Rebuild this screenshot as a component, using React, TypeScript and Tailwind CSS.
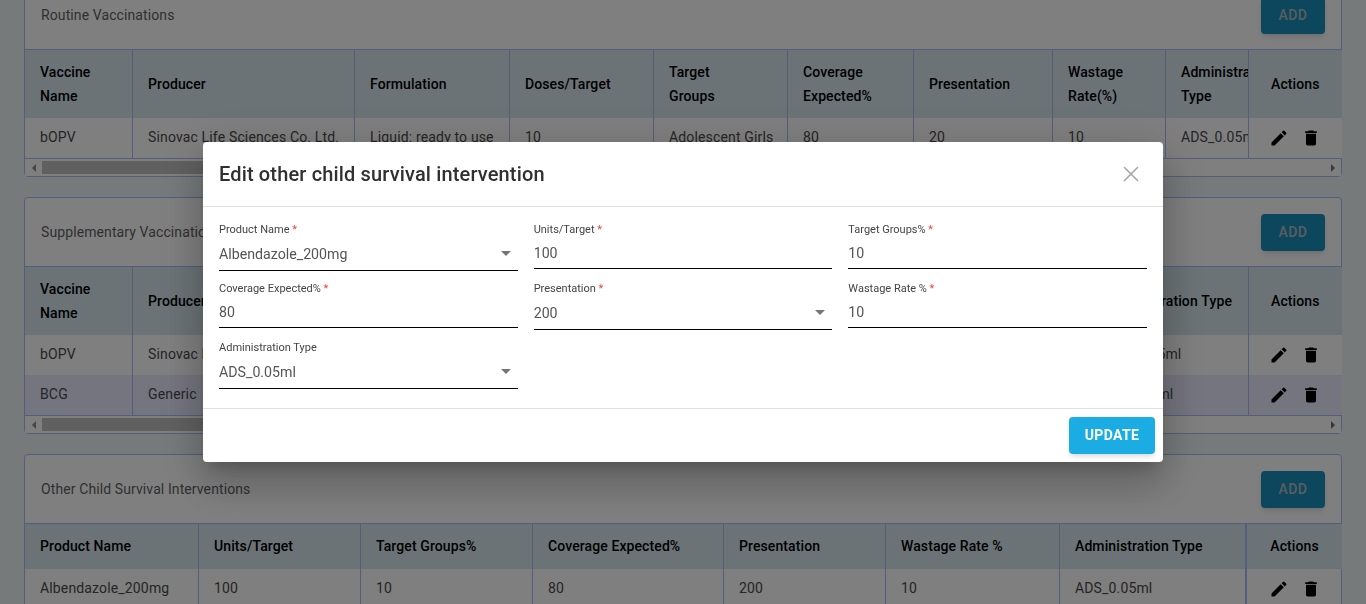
import { X } from "lucide-react";

const font = { fontFamily: "Roboto, sans-serif" };

function EditIcon() {
  return (
    <svg viewBox="0 0 24 24" className="h-5 w-5 fill-black">
      <path d="M3 17.25V21h3.75L17.81 9.94l-3.75-3.75L3 17.25zM20.71 7.04a.996.996 0 0 0 0-1.41l-2.34-2.34a.996.996 0 0 0-1.41 0l-1.83 1.83 3.75 3.75 1.83-1.83z" />
    </svg>
  );
}

function DeleteIcon() {
  return (
    <svg viewBox="0 0 24 24" className="h-5 w-5 fill-black">
      <path d="M6 19c0 1.1.9 2 2 2h8c1.1 0 2-.9 2-2V7H6v12zM19 4h-3.5l-1-1h-5l-1 1H5v2h14V4z" />
    </svg>
  );
}

function Scrollbar() {
  return (
    <div className="flex h-[18px] items-center border-t border-[#aabaff] bg-white">
      <div className="flex w-[17px] justify-center">
        <div className="h-0 w-0 border-y-4 border-r-4 border-y-transparent border-r-[#8c8c8c]" />
      </div>
      <div className="h-[13px] w-[1000px] bg-[#c1c1c1]" />
      <div className="flex-1" />
      <div className="flex w-[17px] justify-center">
        <div className="h-0 w-0 border-y-4 border-l-4 border-y-transparent border-l-[#6e6e6e]" />
      </div>
    </div>
  );
}

function Cardhead({ title }: { title: string }) {
  return (
    <div className="flex h-[69px] items-center justify-between border-b border-[#aabaff] pr-4 pl-4">
      <span className="pb-px text-sm tracking-[0.1px] text-[#5f5f5f]">{title}</span>
      <button className="flex h-[37px] w-16 items-center justify-center rounded bg-[#1a8fbb] pb-px text-sm font-medium tracking-[0.4px] text-[#b5bcc0] shadow-md">
        ADD
      </button>
    </div>
  );
}

function Actions() {
  return (
    <div className="flex items-center justify-center gap-3">
      <EditIcon />
      <DeleteIcon />
    </div>
  );
}

const th = "border-r border-[#aabaff] pr-[14px] pb-px pl-[15.5px] first:pl-[15px] text-left align-middle text-sm leading-6 font-medium tracking-[0.1px] text-black overflow-hidden whitespace-pre-line";
const td = "border-r border-[#aabaff] pr-[14px] pb-[2px] pl-[15.5px] first:pl-[15px] align-middle text-sm tracking-[0.15px] text-[#4a4a4a] overflow-hidden whitespace-nowrap";
const actionsTh = "pb-px text-center text-sm font-medium tracking-[0.1px] text-black";

const routineCols = [107, 222, 155, 144, 134, 126, 139, 113, 83, 94];
const supplementaryCols = [107, 222, 155, 144, 134, 126, 100, 75, 160, 94];
const vaccineHead = ["Vaccine\nName", "Producer", "Formulation", "Doses/Target", "Target\nGroups", "Coverage\nExpected%", "Presentation", "Wastage\nRate(%)", "Administration\nType"];
const supplementaryHead = ["Vaccine\nName", "Producer", "Formulation", "Doses/Target", "Target\nGroups", "Coverage\nExpected%", "Presentation", "Wastage\nRate(%)", "Administration\u00a0Type"];

function VaccineTable({ rows, head, cols }: { rows: string[][]; head: string[]; cols: number[] }) {
  return (
    <table className="w-full table-fixed border-collapse">
      <colgroup>
        {cols.map((w, i) => (
          <col key={i} style={{ width: w }} />
        ))}
      </colgroup>
      <thead>
        <tr className="h-[68px] bg-[#d6e6ec]">
          {head.map((h) => (
            <th key={h} className={th}>{h}</th>
          ))}
          <th className={actionsTh}>Actions</th>
        </tr>
      </thead>
      <tbody>
        {rows.map((r, i) => (
          <tr key={i} className={i % 2 ? "h-10 bg-[#ebeaff]" : "h-10 bg-white"}>
            {r.map((c, j) => (
              <td key={j} className={td}>{c}</td>
            ))}
            <td><Actions /></td>
          </tr>
        ))}
      </tbody>
    </table>
  );
}

const otherCols = [173, 162, 172, 191, 162, 174, 187, 96];
const otherHead = ["Product Name", "Units/Target", "Target Groups%", "Coverage Expected%", "Presentation", "Wastage Rate %", "Administration Type"];
const otherRow = ["Albendazole_200mg", "100", "10", "80", "200", "10", "ADS_0.05ml"];

function Field({ label, value, select, required = true, tall }: { label: string; value: string; select?: boolean; required?: boolean; tall?: boolean }) {
  return (
    <div className="flex flex-col">
      <label className="text-[11px] leading-[14px] text-[#444444]">
        {label}
        {required && <span className="text-[#f44336]"> *</span>}
      </label>
      <div className={tall ? "flex h-[34px] items-center justify-between border-b border-black" : "flex h-[32px] items-center justify-between border-b border-black"}>
        <span className="pt-[2px] text-[14.2px] text-[#555555]">{value}</span>
        {select && <div className="mr-[7px] h-0 w-0 border-x-[5px] border-t-[5px] border-x-transparent border-t-[#757575]" />}
      </div>
    </div>
  );
}

export default function App() {
  const routineRow = ["bOPV", "Sinovac Life Sciences Co. Ltd.", "Liquid: ready to use", "10", "Adolescent Girls", "80", "20", "10", "ADS_0.05ml"];

  return (
    <div style={font} className="relative h-[604px] overflow-hidden bg-[#eef4f7]">
      <div className="-mt-5 flex flex-col gap-5 pr-6 pl-6">
        <section className="rounded border border-[#aabaff] bg-white">
          <Cardhead title="Routine Vaccinations" />
          <VaccineTable cols={routineCols} head={vaccineHead} rows={[routineRow]} />
          <Scrollbar />
        </section>
        <section className="rounded border border-[#aabaff] bg-white">
          <Cardhead title="Supplementary Vaccinations" />
          <VaccineTable
            cols={supplementaryCols}
            head={supplementaryHead}
            rows={[
              routineRow,
              ["BCG", "Generic", "Liquid: ready to use", "10", "Adolescent Girls", "80", "20", "10", "ADS_0.5ml"],
            ]}
          />
          <Scrollbar />
        </section>
        <section className="rounded border border-[#aabaff] bg-white">
          <Cardhead title="Other Child Survival Interventions" />
          <table className="w-full table-fixed border-collapse [&_td:nth-child(7)]:border-r-2 [&_th:nth-child(7)]:border-r-2">
            <colgroup>
              {otherCols.map((w, i) => (
                <col key={i} style={{ width: w }} />
              ))}
            </colgroup>
            <thead>
              <tr className="h-[45px] bg-[#d6e6ec]">
                {otherHead.map((h) => (
                  <th key={h} className={th}>{h}</th>
                ))}
                <th className={actionsTh}>Actions</th>
              </tr>
            </thead>
            <tbody>
              <tr className="h-10">
                {otherRow.map((c, j) => (
                  <td key={j} className={td}>{c}</td>
                ))}
                <td><Actions /></td>
              </tr>
            </tbody>
          </table>
        </section>
      </div>

      <div className="fixed inset-0 flex items-center justify-center bg-black/50">
        <div className="flex h-[320px] w-[960px] flex-col rounded bg-white shadow-[0_11px_15px_-7px_rgba(0,0,0,0.2),0_24px_38px_3px_rgba(0,0,0,0.14),0_9px_46px_8px_rgba(0,0,0,0.12)]">
          <div className="flex h-[65px] items-center justify-between border-b border-[#e0e0e0] pr-[19px] pl-4">
            <h2 className="text-xl font-medium tracking-[0.15px] text-[#303030]">Edit other child survival intervention</h2>
            <X className="h-[26px] w-[26px] text-[#a5a5a5]" strokeWidth={1.5} />
          </div>
          <div className="grid flex-1 grid-cols-3 content-start gap-x-4 gap-y-[11px] px-4 pt-4">
            <Field label="Product Name" value="Albendazole_200mg" select tall />
            <Field label="Units/Target" value="100" />
            <Field label="Target Groups%" value="10" />
            <Field label="Coverage Expected%" value="80" />
            <Field label="Presentation" value="200" select tall />
            <Field label="Wastage Rate %" value="10" />
            <Field label="Administration Type" value="ADS_0.05ml" select required={false} tall />
          </div>
          <div className="flex h-[54px] items-center justify-end border-t border-[#e0e0e0] pr-2">
            <button className="h-[37px] w-[86px] rounded bg-[#1cace4] pb-[2px] text-sm font-bold tracking-[0.4px] text-white shadow-md">UPDATE</button>
          </div>
        </div>
      </div>
    </div>
  );
}
